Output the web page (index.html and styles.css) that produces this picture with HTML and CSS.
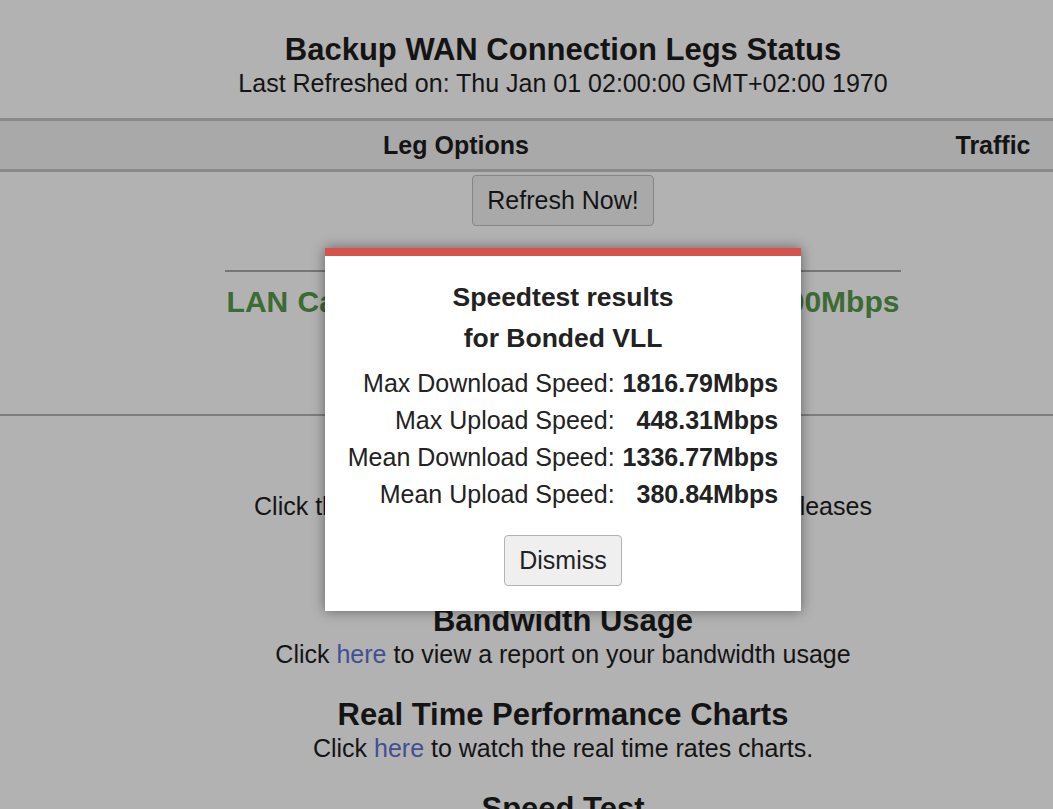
FILE: index.html
```html
<!DOCTYPE html>
<html lang="en">
<head>
<meta charset="utf-8">
<title>Backup WAN Connection Legs Status</title>
<link rel="stylesheet" href="styles.css">
</head>
<body>
<div class="page">
  <header class="status-head">
    <h1 class="title">Backup WAN Connection Legs Status</h1>
    <div class="refreshed">Last Refreshed on: Thu Jan 01 02:00:00 GMT+02:00 1970</div>
  </header>

  <div class="legs">
    <div class="legs-head">
      <div class="th">Leg Options</div>
      <div class="th">Traffic</div>
      <div class="th"></div>
    </div>
    <div class="legs-actions">
      <button class="btn" type="button">Refresh Now!</button>
    </div>
  </div>

  <hr class="rule-short">
  <div class="lan">LAN Capacity: Down 1000Mbps / Up 1000Mbps</div>
  <hr class="rule-full">

  <section class="tool tool-dhcp">
    <h2 class="tool-title">DHCP Leases</h2>
    <p class="tool-text">Click the link here to view the list of active DHCP leases</p>
  </section>

  <section class="tool">
    <h2 class="tool-title">Bandwidth Usage</h2>
    <p class="tool-text">Click <a class="link" href="#">here</a> to view a report on your bandwidth usage</p>
  </section>

  <section class="tool">
    <h2 class="tool-title">Real Time Performance Charts</h2>
    <p class="tool-text">Click <a class="link" href="#">here</a> to watch the real time rates charts.</p>
  </section>

  <section class="tool">
    <h2 class="tool-title">Speed Test</h2>
    <p class="tool-text">Click <a class="link" href="#">here</a> to run a speed test on the bonded connection.</p>
  </section>

  <div class="overlay">
    <div class="modal" role="dialog">
      <h3 class="modal-title">Speedtest results<br>for Bonded VLL</h3>
      <div class="results">
        <div class="r-label">Max Download Speed:</div><div class="r-value">1816.79Mbps</div>
        <div class="r-label">Max Upload Speed:</div><div class="r-value">448.31Mbps</div>
        <div class="r-label">Mean Download Speed:</div><div class="r-value">1336.77Mbps</div>
        <div class="r-label">Mean Upload Speed:</div><div class="r-value">380.84Mbps</div>
      </div>
      <button class="btn btn-dismiss" type="button">Dismiss</button>
    </div>
  </div>
</div>
</body>
</html>
```

FILE: styles.css
```css
html, body {
  margin: 0;
  padding: 0;
  overflow: hidden;
  background: #ffffff;
}

body {
  font-family: "Liberation Sans", Arial, sans-serif;
  color: #1e1e1e;
  font-size: 25px;
}

.page {
  position: relative;
  width: 1126px;
  min-height: 100vh;
  padding-top: 33px;
  padding-bottom: 60px;
  text-align: center;
}

.title {
  margin: 0;
  font-size: 31px;
  line-height: 34px;
  font-weight: bold;
}

.refreshed {
  line-height: 32px;
}

.legs {
  margin-top: 19px;
}

.legs-head {
  display: grid;
  grid-template-columns: 912px 162px 1fr;
  background: #f2f2f2;
  border-top: 3px solid #c6c6c6;
  border-bottom: 3px solid #c6c6c6;
  height: 48px;
  align-items: center;
}

.th {
  font-weight: bold;
  font-size: 25px;
}

.legs-actions {
  margin-top: 3px;
  display: flex;
  justify-content: center;
}

.btn {
  font-family: inherit;
  font-size: 25px;
  color: #1e1e1e;
  height: 51px;
  padding: 0 14px;
  background: #f3f3f3;
  border: 1px solid #c0c0c0;
  border-radius: 4px;
}

.rule-short {
  width: 60%;
  margin: 44px auto 0;
  border: 0;
  border-top: 2px solid #a9a9a9;
  height: 0;
}

.lan {
  margin-top: 12px;
  font-size: 30px;
  line-height: 36px;
  font-weight: bold;
  color: #569a4b;
  word-spacing: 1px;
}

.rule-full {
  margin: 94px 0 0;
  border: 0;
  border-top: 2px solid #b4b4b4;
  height: 0;
}

.tool {
  margin-top: 28px;
}

.tool-dhcp {
  margin-top: 41px;
  margin-bottom: 82px;
}

.tool-title {
  margin: 0;
  font-size: 31px;
  line-height: 32px;
  font-weight: bold;
}

.tool-text {
  margin: 0;
  line-height: 34px;
}

.link {
  color: #6272d2;
  text-decoration: none;
}

/* modal */
.overlay {
  position: absolute;
  inset: 0;
  background: rgba(0, 0, 0, 0.3);
  display: flex;
  justify-content: center;
  align-items: flex-start;
  padding-top: 248px;
  box-sizing: border-box;
}

.modal {
  width: 476px;
  background: #ffffff;
  border-top: 8px solid #d6524a;
  box-shadow: 0 0 12px rgba(0, 0, 0, 0.45);
  padding: 21px 0 25px;
  color: #222222;
  display: flex;
  flex-direction: column;
  align-items: center;
}

.modal-title {
  margin: 0;
  font-size: 26.5px;
  line-height: 41px;
  font-weight: bold;
}

.results {
  margin-top: 6px;
  display: grid;
  grid-template-columns: auto auto;
  column-gap: 8px;
  line-height: 37px;
}

.r-label {
  text-align: right;
}

.r-value {
  text-align: right;
  font-weight: bold;
}

.btn-dismiss {
  margin-top: 22px;
  background: #efefef;
  border-color: #b3b3b3;
  color: #222222;
}
```
